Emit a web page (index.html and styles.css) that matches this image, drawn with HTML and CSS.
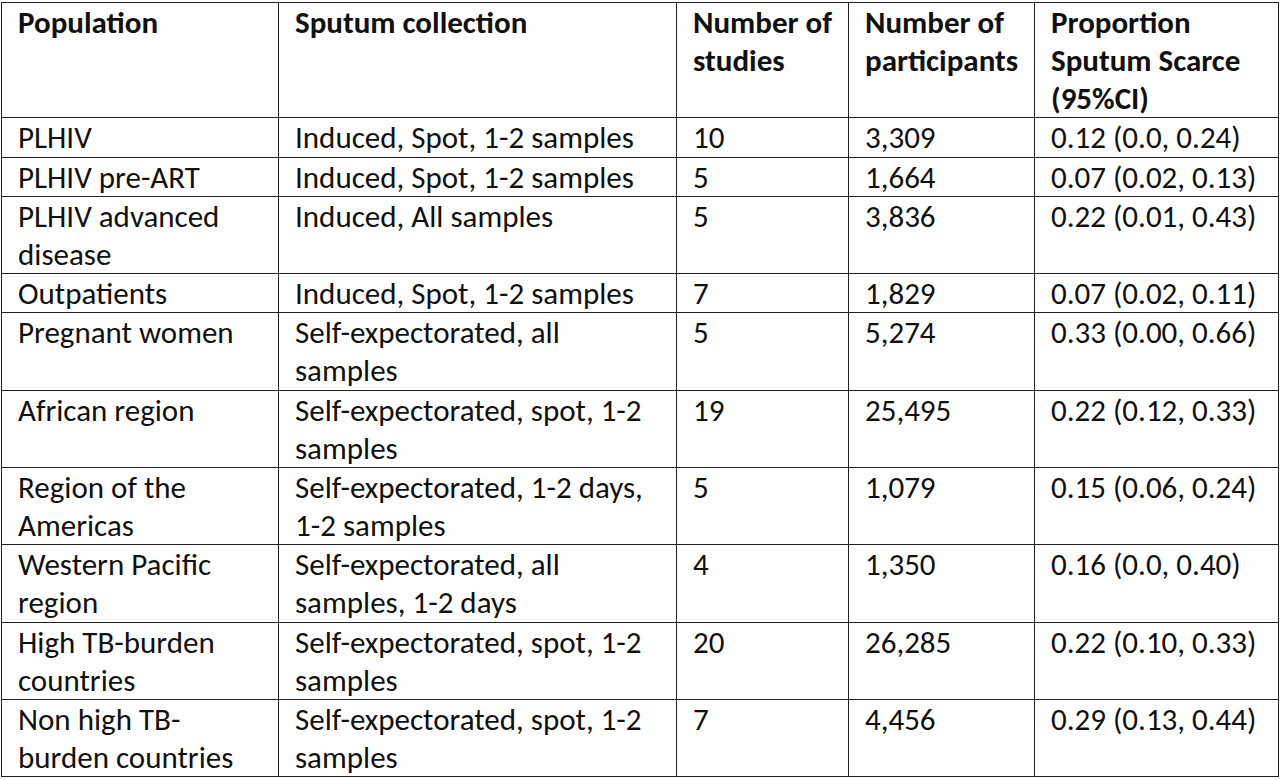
FILE: index.html
```html
<!DOCTYPE html>
<html lang="en">
<head>
<meta charset="utf-8">
<title>Sputum scarce proportions</title>
<link rel="stylesheet" href="styles.css">
</head>
<body>
<table class="data">
  <colgroup>
    <col class="c1"><col class="c2"><col class="c3"><col class="c4"><col class="c5">
  </colgroup>
  <thead>
    <tr>
      <th>Population</th>
      <th>Sputum collection</th>
      <th>Number of studies</th>
      <th>Number of participants</th>
      <th>Proportion Sputum Scarce (95%CI)</th>
    </tr>
  </thead>
  <tbody>
    <tr><td>PLHIV</td><td>Induced, Spot, 1-2 samples</td><td>10</td><td>3,309</td><td>0.12 (0.0, 0.24)</td></tr>
    <tr><td>PLHIV pre-ART</td><td>Induced, Spot, 1-2 samples</td><td>5</td><td>1,664</td><td>0.07 (0.02, 0.13)</td></tr>
    <tr><td>PLHIV advanced disease</td><td>Induced, All samples</td><td>5</td><td>3,836</td><td>0.22 (0.01, 0.43)</td></tr>
    <tr><td>Outpatients</td><td>Induced, Spot, 1-2 samples</td><td>7</td><td>1,829</td><td>0.07 (0.02, 0.11)</td></tr>
    <tr><td>Pregnant women</td><td>Self-expectorated, all samples</td><td>5</td><td>5,274</td><td>0.33 (0.00, 0.66)</td></tr>
    <tr><td>African region</td><td>Self-expectorated, spot, 1-2 samples</td><td>19</td><td>25,495</td><td>0.22 (0.12, 0.33)</td></tr>
    <tr><td>Region of the Americas</td><td>Self-expectorated, 1-2 days, 1-2 samples</td><td>5</td><td>1,079</td><td>0.15 (0.06, 0.24)</td></tr>
    <tr><td>Western Pacific region</td><td>Self-expectorated, all samples, 1-2 days</td><td>4</td><td>1,350</td><td>0.16 (0.0, 0.40)</td></tr>
    <tr><td>High TB-burden countries</td><td>Self-expectorated, spot, 1-2 samples</td><td>20</td><td>26,285</td><td>0.22 (0.10, 0.33)</td></tr>
    <tr><td>Non high TB-burden countries</td><td>Self-expectorated, spot, 1-2 samples</td><td>7</td><td>4,456</td><td>0.29 (0.13, 0.44)</td></tr>
  </tbody>
</table>
</body>
</html>
```
FILE: styles.css
```css
html, body {
  margin: 0;
  padding: 0;
  background: #ffffff;
}
body {
  padding: 2px 0 0 1px;
  font-family: Carlito, Calibri, Lato, "Noto Sans", sans-serif;
  color: #111111;
}
.data {
  border-collapse: collapse;
  table-layout: fixed;
  width: 1277px;
  font-size: 31px;
  line-height: 38.15px;
}
.c1 { width: 277px; }
.c2 { width: 398px; }
.c3 { width: 172px; }
.c4 { width: 186px; }
.c5 { width: 244px; }
.data th,
.data td {
  border: 1px solid #222222;
  padding: 0 11px 0 16px;
  vertical-align: top;
  text-align: left;
}
.data th {
  font-weight: 700;
}
```
